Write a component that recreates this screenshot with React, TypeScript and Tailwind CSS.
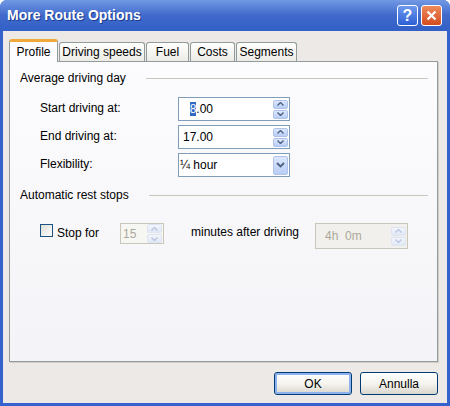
import React from 'react';

const SpinButtons = ({ disabled }: { disabled?: boolean }) => {
  const btn = disabled
    ? 'bg-gradient-to-b from-[#f2f5fc] to-[#e1e8f6] border-[#dfe5f0]'
    : 'bg-gradient-to-b from-[#dde8fd] to-[#b9cdf5] border-[#aec2ea]';
  const arrow = disabled ? '#b9c6de' : '#4d6185';
  return (
    <div className="flex flex-col gap-[1px] mr-[1px]">
      <div className={`w-[15px] h-[9px] border rounded-[2px] flex items-center justify-center ${btn}`}>
        <svg width="7" height="4" viewBox="0 0 7 4"><path d="M0.5 3.5 L3.5 0.5 L6.5 3.5" stroke={arrow} strokeWidth="1.4" fill="none" /></svg>
      </div>
      <div className={`w-[15px] h-[9px] border rounded-[2px] flex items-center justify-center ${btn}`}>
        <svg width="7" height="4" viewBox="0 0 7 4"><path d="M0.5 0.5 L3.5 3.5 L6.5 0.5" stroke={arrow} strokeWidth="1.4" fill="none" /></svg>
      </div>
    </div>
  );
};

const GroupHeader = ({ title }: { title: string }) => (
  <div className="flex items-center h-[18px]">
    <span className="pr-[20px] whitespace-nowrap">{title}</span>
    <div className="flex-1 h-px bg-[#c8c6bf]" />
  </div>
);

const Tab = ({ label, w, active }: { label: string; w: string; active?: boolean }) =>
  active ? (
    <div className={`${w} h-[23px] -mb-px relative z-10 bg-[#fcfcfe] border border-b-0 border-[#919b9c] rounded-t-[3px] border-t-[3px] border-t-[#f0a83a] flex items-center justify-center`}>
      {label}
    </div>
  ) : (
    <div className={`${w} h-[19px] bg-gradient-to-b from-white to-[#ecebe5] border border-b-0 border-[#919b9c] rounded-t-[3px] flex items-center justify-center`}>
      {label}
    </div>
  );

const XpButton = ({ label, isDefault }: { label: string; isDefault?: boolean }) => (
  <div className={`w-[78px] h-[23px] rounded-[3px] border border-[#003c74] bg-gradient-to-b from-white via-[#f5f4ef] to-[#d9d6cd] flex items-center justify-center ${isDefault ? 'shadow-[inset_0_0_0_2px_#8eb2ee]' : ''}`}>
    {label}
  </div>
);

export default function App() {
  return (
    <div className="w-[450px] h-[406px] flex flex-col bg-[#3562cc] rounded-t-[7px] overflow-hidden text-[12px] text-black font-['Liberation_Sans',Arial,sans-serif]">
      {/* Title bar */}
      <div className="h-[31px] flex items-center px-[7px] bg-gradient-to-b from-[#7299e4] via-[#4069cb] to-[#3260c6]">
        <span className="flex-1 text-white font-bold text-[14px] [text-shadow:1px_1px_0_#1c3a8a]">More Route Options</span>
        <div className="flex gap-[3px] mr-[1px]">
          <div className="w-[21px] h-[21px] rounded-[3px] border border-white bg-gradient-to-b from-[#6f98ee] to-[#2c5fd4] flex items-center justify-center text-white font-bold text-[16px]">?</div>
          <div className="w-[21px] h-[21px] rounded-[3px] border border-white bg-gradient-to-b from-[#ee8a5c] to-[#d44c1c] flex items-center justify-center">
            <svg width="11" height="11" viewBox="0 0 11 11"><path d="M1.5 1.5 L9.5 9.5 M9.5 1.5 L1.5 9.5" stroke="white" strokeWidth="2.2" /></svg>
          </div>
        </div>
      </div>

      {/* Body */}
      <div className="flex-1 mx-[3px] mb-[3px] bg-[#ece9e6] flex flex-col pl-[6px] pr-[9px] pt-[8px]">
        {/* Tabs */}
        <div className="flex items-end h-[22px] gap-[1px]">
          <Tab label="Profile" w="w-[49px]" active />
          <Tab label="Driving speeds" w="w-[86px]" />
          <Tab label="Fuel" w="w-[43px]" />
          <Tab label="Costs" w="w-[45px]" />
          <Tab label="Segments" w="w-[61px]" />
        </div>

        {/* Panel */}
        <div className="h-[301px] border border-[#919b9c] bg-gradient-to-b from-[#fcfcfe] to-[#f4f4f8] shadow-[1px_1px_0_#d0cec6] pl-[10px] pr-[9px] pt-[7px]">
          <GroupHeader title="Average driving day" />

          <div className="grid grid-cols-[138px_112px] gap-y-[4px] pl-[20px] mt-[10px] items-center">
            <span className="-mt-[3px]">Start driving at:</span>
            <div className="h-[24px] border border-[#7f9db9] bg-white flex items-center">
              <div className="flex-1 flex">
                <span className="w-[34px] text-right">
                  <span className="bg-[#316ac5] text-white">8</span>.00
                </span>
              </div>
              <SpinButtons />
            </div>

            <span className="-mt-[3px]">End driving at:</span>
            <div className="h-[24px] border border-[#7f9db9] bg-white flex items-center">
              <div className="flex-1 flex">
                <span className="w-[34px] text-right">17.00</span>
              </div>
              <SpinButtons />
            </div>

            <span className="-mt-[3px]">Flexibility:</span>
            <div className="h-[24px] border border-[#7f9db9] bg-white flex items-center">
              <span className="flex-1 pl-[1px]">¼ hour</span>
              <div className="w-[15px] h-[19px] mr-[1px] border border-[#aec2ea] rounded-[2px] bg-gradient-to-b from-[#dde8fd] to-[#b9cdf5] flex items-center justify-center">
                <svg width="9" height="6" viewBox="0 0 9 6"><path d="M1 1 L4.5 4.5 L8 1" stroke="#4d6185" strokeWidth="1.8" fill="none" /></svg>
              </div>
            </div>
          </div>

          <div className="mt-[9px]">
            <GroupHeader title="Automatic rest stops" />
          </div>

          <div className="flex items-start pl-[20px] mt-[19px]">
            <div className="w-[13px] h-[13px] mt-[1px] border border-[#1c5180] bg-gradient-to-br from-[#dcdcd7] to-white" />
            <span className="ml-[4px] w-[63px] mt-[1px]">Stop for</span>
            <div className="w-[44px] h-[21px] border border-[#c9c7ba] bg-[#f6f6f3] flex items-center">
              <span className="flex-1 pl-[2px] text-[#aca899]">15</span>
              <SpinButtons disabled />
            </div>
            <span className="ml-[27px] w-[124px]">minutes after driving</span>
            <div className="w-[93px] h-[26px] border border-[#c9c7ba] bg-[#f1f0ec] flex items-center">
              <span className="flex-1 pl-[9px] text-[#aca899]">4h&nbsp;&nbsp;0m</span>
              <SpinButtons disabled />
            </div>
          </div>
        </div>

        {/* Buttons */}
        <div className="flex justify-end gap-[8px] mt-[10px]">
          <XpButton label="OK" isDefault />
          <XpButton label="Annulla" />
        </div>
      </div>
    </div>
  );
}
